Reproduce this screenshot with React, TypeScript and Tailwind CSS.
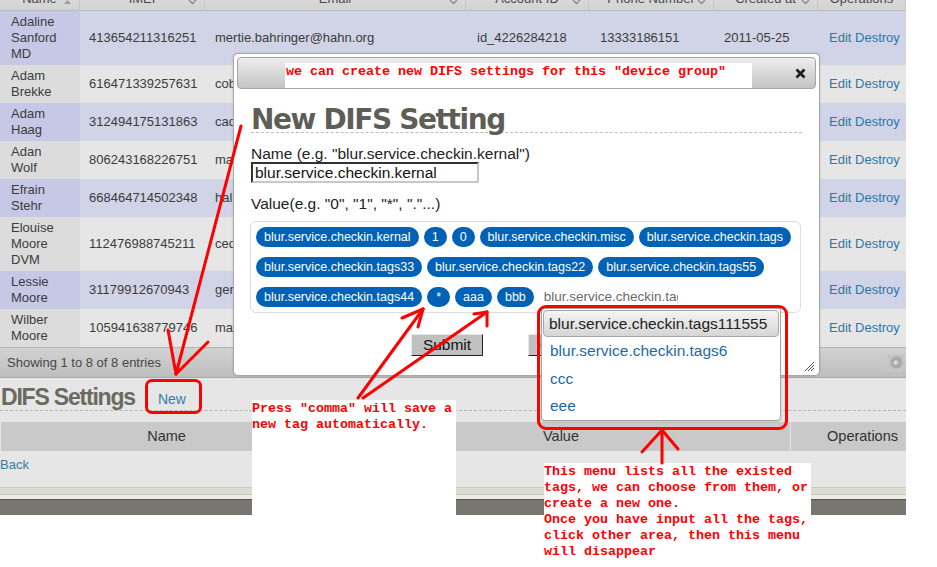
import React from "react";

const cols = "grid grid-cols-[80px_125px_261px_123px_125px_104px_88px]";

const people = [
  { name: ["Adaline", "Sanford", "MD"], imei: "413654211316251", email: "mertie.bahringer@hahn.org", account: "id_4226284218", phone: "13333186151", created: "2011-05-25" },
  { name: ["Adam", "Brekke"], imei: "616471339257631", email: "cobi.kshlerin@ward.biz", account: "id_1732963077", phone: "13318620543", created: "2011-05-25" },
  { name: ["Adam", "Haag"], imei: "312494175131863", email: "cade.runolfsson@kub.com", account: "id_3306512948", phone: "13591724406", created: "2011-05-25" },
  { name: ["Adan", "Wolf"], imei: "806243168226751", email: "maximo@bogan.info", account: "id_8417302561", phone: "13720935518", created: "2011-05-25" },
  { name: ["Efrain", "Stehr"], imei: "668464714502348", email: "hal.mraz@jast.net", account: "id_5520917743", phone: "13644081297", created: "2011-05-25" },
  { name: ["Elouise", "Moore", "DVM"], imei: "112476988745211", email: "cedrick@okon.org", account: "id_2290471836", phone: "13865207731", created: "2011-05-25" },
  { name: ["Lessie", "Moore"], imei: "31179912670943", email: "gerson@hills.com", account: "id_6613058429", phone: "13427719360", created: "2011-05-25" },
  { name: ["Wilber", "Moore"], imei: "105941638779746", email: "mafalda@fay.biz", account: "id_9071546382", phone: "13902658814", created: "2011-05-25" },
];

const headers = ["Name", "IMEI", "Email", "Account ID", "Phone Number", "Created at", "Operations"];

const tagRows = [
  ["blur.service.checkin.kernal", "1", "0", "blur.service.checkin.misc", "blur.service.checkin.tags"],
  ["blur.service.checkin.tags33", "blur.service.checkin.tags22", "blur.service.checkin.tags55"],
  ["blur.service.checkin.tags44", "*", "aaa", "bbb"],
];

const menuItems = ["blur.service.checkin.tags6", "ccc", "eee"];

const note = "absolute bg-white text-[#ff0000] font-['Liberation_Mono',monospace] font-bold text-[13.33px] leading-[16px] whitespace-pre";

function DataTable() {
  return (
    <div className="text-[13px] leading-[16px] text-[#3c3c3c]">
      <div className={`${cols} -mt-[19px] h-[30px] border-b border-[#bcbcbc] text-[#4a4a4a]`}>
        {headers.map((h, i) => (
          <div key={h} className="relative flex items-end justify-center pb-[3px] border-r border-[#c6c6c6] bg-gradient-to-b from-[#e4e4e4] to-[#d3d3d3]">
            <span>{h}</span>
            {i < 6 && (
              <svg className="absolute right-[7px] bottom-[5px]" width="9" height="6" viewBox="0 0 9 6">
                {i === 0 ? <path d="M1 5 L4.5 1 L8 5 Z" fill="#9a9a9a" /> : <path d="M1 1 L4.5 4.5 L8 1" stroke="#8a8a8a" strokeWidth="1.3" fill="none" />}
              </svg>
            )}
          </div>
        ))}
      </div>
      {people.map((p, i) => {
        const odd = i % 2 === 0;
        return (
          <div key={p.imei} className={`${cols} ${odd ? "bg-[#d1d3e7]" : "bg-[#e6e6e6]"}`}>
            <div className={`py-[3px] pl-[11px] flex flex-col justify-center ${odd ? "bg-[#c7c8e6]" : "bg-[#dcdcdc]"}`}>
              {p.name.map((n) => (
                <span key={n}>{n}</span>
              ))}
            </div>
            <div className="flex items-center pl-[9px]">{p.imei}</div>
            <div className="flex items-center pl-[10px] whitespace-nowrap overflow-hidden">{p.email}</div>
            <div className="flex items-center pl-[11px]">{p.account}</div>
            <div className="flex items-center pl-[11px]">{p.phone}</div>
            <div className="flex items-center pl-[10px]">{p.created}</div>
            <div className="flex items-center pl-[11px] text-[#2c78a6] whitespace-nowrap">Edit Destroy</div>
          </div>
        );
      })}
      <div className="relative h-[31px] flex items-center pl-[7px] border-t border-[#b3b3b3] border-b border-b-[#a8a8a8] bg-gradient-to-b from-[#d2d2d2] to-[#bebebe] text-[#474747]">
        Showing 1 to 8 of 8 entries
        <div className="absolute right-[1px] top-[6px] w-[18px] h-[17px] flex items-center justify-center border border-[#c8c8c8] bg-[#c4c4c4]">
          <svg width="13" height="13" viewBox="0 0 13 13">
            <circle cx="6.5" cy="6.5" r="6" fill="#a9a9a9" />
            <path d="M8.5 6.5 H4.5 M6.5 4.3 L4.3 6.5 L6.5 8.7" stroke="#dedede" strokeWidth="1.6" fill="none" />
          </svg>
        </div>
      </div>
    </div>
  );
}

function DifsSection() {
  return (
    <div>
      <div className="h-[33px] flex items-end pb-[2px] border-b border-dashed border-[#b8b8b8]">
        <h2 className="pl-[1px] font-['Liberation_Sans',Arial,sans-serif] font-bold text-[23px] leading-[22px] tracking-[-1.2px] text-[#6a6a63]">DIFS Settings</h2>
        <a className="ml-[23px] mb-[1px] text-[14px] leading-[16px] text-[#3a7ba6]">New</a>
      </div>
      <div className="mt-[11px] ml-[1px] h-[29px] grid grid-cols-[331px_458px_116px] bg-[#c9c9c9] text-[14.5px] text-[#333]">
        <div className="flex items-center justify-center">Name</div>
        <div className="flex items-center justify-center">Value</div>
        <div className="flex items-center justify-end pr-[8px] border-l border-[#e6e6e6]">Operations</div>
      </div>
      <div className="mt-[6px] h-[17px] text-[13px] leading-[16px] text-[#3a7ba6]">Back</div>
      <div className="mt-[13px] h-[7px] border-t border-[#cacac2] bg-[#dcdcd1]" />
      <div className="h-[5px] border-t border-[#c9c9c9] bg-[#ebebeb]" />
      <div className="relative h-[18px] border-t border-[#55554f] bg-[#777670] overflow-hidden">
        <span className="absolute left-[1px] top-[11px] text-[13px] font-bold text-[#f0a33a]">Privacy Details</span>
        <span className="absolute left-[822px] top-[11px] text-[12px] text-[#c9c9c2]">Link Help</span>
      </div>
    </div>
  );
}

function Modal() {
  return (
    <div className="absolute left-[233px] top-[53px] w-[587px] h-[323px] rounded-[5px] border border-[#a8a8a8] bg-white p-[2px] shadow-[0_0_2px_rgba(0,0,0,0.2)]">
      <div className="h-[32px] mt-[1px] mx-[1px] rounded-[4px] border border-[#a6a6a6] bg-gradient-to-b from-[#eeeeee] to-[#c4c4c4] flex items-center justify-end pr-[9px]">
        <svg width="11" height="11" viewBox="0 0 11 11">
          <path d="M1.5 1.5 L9.5 9.5 M9.5 1.5 L1.5 9.5" stroke="#1e1e1e" strokeWidth="2.6" />
        </svg>
      </div>
      <div className="pl-[15px] pr-[15px] font-['Liberation_Sans',Arial,sans-serif]">
        <h1 className="mt-[18px] h-[26px] leading-[26px] font-['DejaVu_Sans',Verdana,sans-serif] font-bold text-[28px] tracking-[-1.4px] text-[#5e5e56] border-b border-dashed border-[#bdbdbd]">
          New DIFS Setting
        </h1>
        <div className="mt-[12px] text-[15.5px] leading-[17px] text-[#222]">Name (e.g. "blur.service.checkin.kernal")</div>
        <div className="w-[228px] h-[21px] border-2 border-t-[#333] border-l-[#333] border-b-[#c8c8c8] border-r-[#c8c8c8] pl-[2px] text-[15.5px] leading-[17px] text-[#111] whitespace-nowrap">
          blur.service.checkin.kernal
        </div>
        <div className="mt-[12px] text-[15.5px] leading-[17px] text-[#222]">Value(e.g. "0", "1", "*", "."...)</div>
        <div className="mt-[9px] -ml-[1px] w-[551px] h-[92px] rounded-[6px] border border-[#dcdcdc] p-[5px] flex flex-col gap-[10px]">
          {tagRows.map((row, ri) => (
            <div key={ri} className="flex gap-[5px] h-[20px]">
              {row.map((t) => (
                <span key={t} className="h-[20px] min-w-[23px] rounded-full bg-[#0062b6] px-[8px] flex items-center justify-center text-white text-[12.5px] leading-[14px] whitespace-nowrap">
                  {t}
                </span>
              ))}
              {ri === 2 && (
                <span className="ml-[5px] w-[134px] overflow-hidden whitespace-nowrap text-[13.5px] leading-[20px] text-[#6a6a6a]">blur.service.checkin.tags</span>
              )}
            </div>
          ))}
        </div>
        <div className="mt-[21px] flex gap-[45px] pl-[160px]">
          <button className="w-[72px] h-[22px] bg-[#c0c0c0] border border-[#e8e8e8] border-r-[#222] border-b-[#222] text-[15.5px] leading-[18px] text-[#111]">Submit</button>
          <button className="w-[72px] h-[22px] bg-[#c0c0c0] border border-[#e8e8e8] border-r-[#222] border-b-[#222] text-[15.5px] leading-[18px] text-[#111]">Cancel</button>
        </div>
      </div>
      <svg className="absolute right-[4px] bottom-[3px]" width="11" height="11" viewBox="0 0 11 11">
        <path d="M1 10 L10 1 M4 10 L10 4 M7 10 L10 7" stroke="#555" strokeWidth="1" />
      </svg>
    </div>
  );
}

function TagMenu() {
  return (
    <div className="absolute left-[541px] top-[308px] w-[240px] h-[113px] rounded-b-[4px] border border-[#a3a3a3] bg-white pt-[1px] px-[1px] shadow-[0_1px_2px_rgba(0,0,0,0.15)] text-[15.5px] font-['Liberation_Sans',Arial,sans-serif]">
      <div className="h-[27px] rounded-[4px] border border-[#a8a8a8] bg-gradient-to-b from-[#f4f4f4] to-[#d6d6d6] flex items-center pl-[5px] text-[#222] whitespace-nowrap">
        blur.service.checkin.tags111555
      </div>
      {menuItems.map((m) => (
        <div key={m} className="h-[27.5px] flex items-center pl-[7px] text-[#1d6aa2] whitespace-nowrap">
          {m}
        </div>
      ))}
    </div>
  );
}

function Annotations() {
  return (
    <>
      <div className={`${note} left-[285px] top-[63px] w-[467px] h-[25px] pl-[1px] pt-[1px]`}>we can create new DIFS settings for this "device group"</div>
      <div className={`${note} left-[252px] top-[400px] w-[204px] h-[115px] pt-[1px]`}>{"Press \"comma\" will save a\nnew tag automatically."}</div>
      <div className={`${note} left-[544px] top-[463px] w-[267px] pt-[1px]`}>
        {"This menu lists all the existed\ntags, we can choose from them, or\ncreate a new one.\nOnce you have input all the tags,\nclick other area, then this menu\nwill disappear"}
      </div>
      <div className="absolute left-[145px] top-[379px] w-[57px] h-[35px] rounded-[7px] border-[3px] border-[#ff0000]" />
      <div className="absolute left-[537px] top-[305px] w-[251px] h-[125px] rounded-[9px] border-[3px] border-[#ff0000]" />
      <svg className="absolute left-0 top-0 pointer-events-none" width="937" height="567" viewBox="0 0 937 567">
        <g stroke="#ff0000" strokeWidth="3" fill="none" strokeLinecap="round">
          <line x1="241" y1="126" x2="176" y2="374" />
          <line x1="168" y1="330" x2="176" y2="374" />
          <line x1="208" y1="342" x2="176" y2="374" />
          <line x1="358" y1="398" x2="423" y2="309" />
          <line x1="402" y1="318" x2="423" y2="309" />
          <line x1="418" y1="327" x2="423" y2="309" />
          <line x1="363" y1="398" x2="487" y2="312" />
          <line x1="474" y1="314" x2="487" y2="312" />
          <line x1="487" y1="326" x2="487" y2="312" />
          <line x1="662" y1="463" x2="662" y2="430" />
          <line x1="642" y1="452" x2="662" y2="430" />
          <line x1="678" y1="449" x2="662" y2="430" />
        </g>
      </svg>
    </>
  );
}

export default function App() {
  return (
    <div className="relative w-[937px] h-[567px] overflow-hidden bg-white font-['Liberation_Sans',Arial,sans-serif]">
      <div className="w-[906px] h-[515px] overflow-hidden bg-[#e6e6e6]">
        <DataTable />
        <DifsSection />
      </div>
      <Modal />
      <TagMenu />
      <Annotations />
    </div>
  );
}
